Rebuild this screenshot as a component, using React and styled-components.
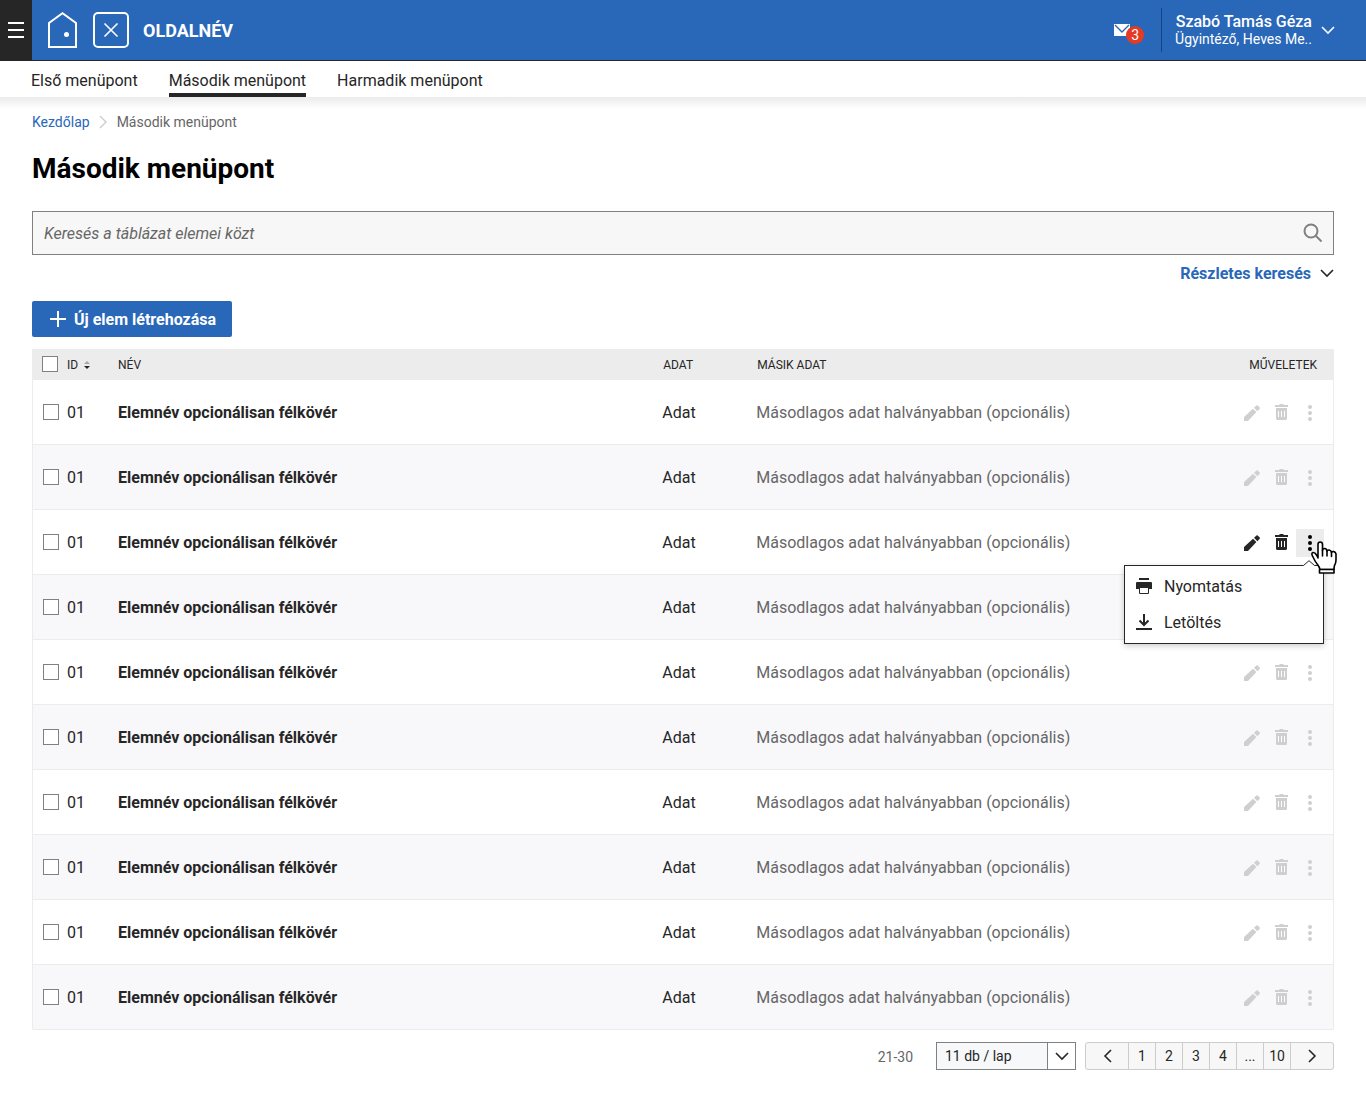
import React, { useState } from 'react';
import styled, { createGlobalStyle } from 'styled-components';

const colors = {
  blue: '#2967b9',
  dark: '#262626',
  grey: '#666666',
  border: '#ececec',
};

const GlobalStyle = createGlobalStyle`
  * {
    box-sizing: border-box;
  }
  body {
    margin: 0;
    background: #ffffff;
    color: ${colors.dark};
    font-family: Roboto, "Open Sans", sans-serif;
    font-size: 16px;
    line-height: 20px;
  }
  button, input, select {
    font: inherit;
    color: inherit;
  }
  button {
    padding: 0;
    border: none;
    background: none;
    cursor: pointer;
  }
  svg {
    display: block;
    flex: none;
  }
`;

//Text beside an icon
const Label = styled.span`
  padding-top: 2px;
`;

//Header
const Header = styled.header`
  display: flex;
  align-items: stretch;
  height: 61px;
  background: ${colors.blue};
  color: #ffffff;
  border-bottom: 1px solid ${colors.dark};
`;

const MenuButton = styled.button`
  display: flex;
  align-items: center;
  justify-content: center;
  width: 32px;
  background: ${colors.dark};
`;

const Brand = styled.div`
  display: flex;
  align-items: center;
  gap: 14px;
  padding-left: 16px;
  font-size: 18px;
  font-weight: 700;
`;

const LogoLinks = styled.div`
  display: flex;
  align-items: center;
  gap: 16px;
`;

const LogoLink = styled.a`
  display: block;
  color: inherit;
`;

const HeaderTools = styled.div`
  display: flex;
  align-items: center;
  gap: 17px;
  margin-left: auto;
  padding-right: 31px;
`;

const MailButton = styled.button`
  display: flex;
  position: relative;
  width: 30px;
  color: #ffffff;
`;

const Badge = styled.span`
  position: absolute;
  left: 12px;
  top: 2px;
  width: 18px;
  height: 18px;
  border-radius: 9px;
  background: #e63a24;
  font-size: 14px;
  line-height: 18px;
  text-align: center;
`;

const UserButton = styled.button`
  display: flex;
  align-items: center;
  gap: 9px;
  height: 44px;
  padding-left: 13px;
  border-left: 1px solid #10437f;
  color: #ffffff;
  text-align: right;
`;

const UserName = styled.span`
  display: block;
  font-weight: 500;
  line-height: 18px;
`;

const UserRole = styled.span`
  display: block;
  font-size: 14px;
  line-height: 16px;
`;

//Navigation
const Nav = styled.nav`
  display: flex;
  gap: 31px;
  height: 36px;
  padding-left: 31px;
`;

const NavLink = styled.a`
  padding-top: 10px;
  color: ${colors.dark};
  text-decoration: none;
  border-bottom: 4px solid ${(props) => (props.$active ? colors.dark : 'transparent')};
`;

const NavShadow = styled.div`
  height: 12px;
  background: linear-gradient(#ebebeb, #ffffff);
`;

//Page content
const Main = styled.main`
  padding: 0 32px 34px;
`;

const Breadcrumb = styled.div`
  display: flex;
  align-items: center;
  gap: 9px;
  height: 25px;
  font-size: 14px;
  color: ${colors.grey};

  a {
    color: ${colors.blue};
    text-decoration: none;
  }
`;

const Title = styled.h1`
  margin: 17px 0 24px;
  color: #000000;
  font-size: 28px;
  line-height: 36px;
  font-weight: 700;
`;

const SearchBox = styled.div`
  display: flex;
  align-items: center;
  height: 44px;
  padding: 0 10px 0 11px;
  border: 1px solid #808080;
  background: #f7f7f7;
`;

const SearchInput = styled.input`
  flex: 1;
  min-width: 0;
  padding: 2px 0 0;
  border: none;
  outline: none;
  background: transparent;

  &::placeholder {
    color: ${colors.grey};
    font-style: italic;
    opacity: 1;
  }
`;

const IconButton = styled.button`
  display: flex;
`;

const DetailsButton = styled.button`
  display: flex;
  align-items: center;
  gap: 9px;
  margin: 8px 0 18px auto;
  color: ${colors.blue};
  font-weight: 700;
  line-height: 18px;
`;

const CreateButton = styled.button`
  display: flex;
  align-items: center;
  gap: 8px;
  height: 36px;
  padding: 0 16px 0 18px;
  border-radius: 2px;
  background: ${colors.blue};
  color: #ffffff;
  font-weight: 700;
`;

//Table
const Table = styled.table`
  width: 100%;
  margin-top: 12px;
  table-layout: fixed;
  border-collapse: separate;
  border-spacing: 0;
`;

const Th = styled.th`
  width: ${(props) => props.$width || 'auto'};
  height: 31px;
  padding: ${(props) => props.$pad || '0'};
  background: ${colors.border};
  font-size: 12px;
  font-weight: 400;
  text-align: ${(props) => props.$align || 'left'};
  text-transform: uppercase;
`;

const SortButton = styled.button`
  display: flex;
  align-items: center;
  gap: 6px;
`;

const Row = styled.tr`
  background: ${(props) => (props.$odd ? '#f8f8fb' : '#ffffff')};

  &:last-child td:first-child {
    border-bottom-left-radius: 2px;
  }
  &:last-child td:last-child {
    border-bottom-right-radius: 2px;
  }
`;

const Td = styled.td`
  height: 65px;
  padding: 2px 0 0;
  border-bottom: 1px solid ${colors.border};
  color: ${(props) => (props.$muted ? colors.grey : colors.dark)};
  font-weight: ${(props) => (props.$bold ? 700 : 400)};

  &:first-child {
    padding: 0 0 0 10px;
    border-left: 1px solid ${colors.border};
  }
  &:last-child {
    padding-right: 9px;
    border-right: 1px solid ${colors.border};
  }
`;

const Checkbox = styled.input`
  display: block;
  appearance: none;
  width: 16px;
  height: 16px;
  margin: 0;
  border: 1px solid #808080;
  background: #ffffff;

  &:checked {
    background: ${colors.blue};
  }
`;

const Actions = styled.div`
  display: flex;
  justify-content: flex-end;
  gap: 1px;
  color: ${(props) => (props.$active ? colors.dark : '#cfcfcf')};
`;

const ActionButton = styled.button`
  display: flex;
  align-items: center;
  justify-content: center;
  width: 28px;
  height: 28px;
  background: ${(props) => (props.$open ? colors.border : 'transparent')};
  color: ${(props) => (props.$open ? '#000000' : 'inherit')};
`;

const MenuAnchor = styled.div`
  position: relative;
`;

const Menu = styled.div`
  position: absolute;
  z-index: 1;
  top: 36px;
  right: 0;
  width: 200px;
  padding: 2px 0 3px;
  border: 1px solid ${colors.dark};
  background: #ffffff;
  box-shadow: 0 2px 6px rgba(0, 0, 0, 0.2);
`;

const MenuCaret = styled.svg`
  position: absolute;
  top: -6px;
  right: 7px;
`;

const MenuItem = styled.button`
  display: flex;
  align-items: center;
  gap: 12px;
  width: 100%;
  height: 36px;
  padding-left: 11px;
  color: ${colors.dark};
`;

const Pointer = styled.svg`
  position: absolute;
  z-index: 2;
  top: 12px;
  left: 14px;
  pointer-events: none;
`;

//Footer with paging
const Footer = styled.div`
  display: flex;
  align-items: center;
  justify-content: flex-end;
  margin-top: 12px;
  font-size: 14px;
`;

const Range = styled(Label)`
  margin-right: 23px;
  color: ${colors.grey};
`;

const SelectBox = styled.div`
  display: grid;
  grid-template-columns: 110px 28px;
  height: 28px;
  margin-right: 9px;
  border: 1px solid #808080;
  background: #f7f8fa;
`;

const PageSize = styled.select`
  grid-area: 1 / 1 / 2 / 3;
  appearance: none;
  padding: 0 0 0 8px;
  border: none;
  background: transparent;
`;

const SelectArrow = styled.span`
  grid-area: 1 / 2;
  display: flex;
  align-items: center;
  justify-content: center;
  border-left: 1px solid #808080;
  background: #ffffff;
  pointer-events: none;
`;

const Pager = styled.nav`
  display: flex;
  height: 28px;
  border: 1px solid #cccccc;
  border-radius: 3px;
  background: #f7f7f7;
`;

const PageButton = styled.button`
  display: flex;
  align-items: center;
  justify-content: center;
  width: ${(props) => props.$width || '27px'};

  & + & {
    border-left: 1px solid #cccccc;
  }
`;

const Chevron = ({ d = 'M1 1l6 6 6-6', width = 14, height = 9 }) => (
  <svg width={width} height={height} viewBox={`0 0 ${width} ${height}`} fill="none" stroke="currentColor" strokeWidth="1.6">
    <path d={d} />
  </svg>
);

const DarkIcon = styled.span`
  display: flex;
  color: ${colors.dark};
`;

const PencilIcon = () => (
  <svg width="16" height="16" viewBox="0 0 16 16" fill="currentColor">
    <path d="M0 16v-4L9 3.700l3.400 3.400L4 16zM10 2.800L12.500.5q.6-.6 1.200 0l2 2q.6.6 0 1.200l-2.300 2.500z" />
  </svg>
);

const TrashIcon = () => (
  <svg width="13" height="18" viewBox="0 0 13 18">
    <path fill="currentColor" d="M0 1h4.500V0h4v1H13v2H0zM1 4h11v10.500q0 1.500-1.500 1.500h-8Q1 16 1 14.500z" />
    <path stroke="#ffffff" d="M3.500 7v6M6.500 7v6M9.500 7v6" />
  </svg>
);

const DotsIcon = () => (
  <svg width="4" height="16" viewBox="0 0 4 16" fill="currentColor">
    <circle cx="2" cy="2" r="2" />
    <circle cx="2" cy="8" r="2" />
    <circle cx="2" cy="14" r="2" />
  </svg>
);

const PrintIcon = () => (
  <svg width="16" height="16" viewBox="0 0 16 16">
    <path fill="currentColor" d="M3 0h10v2H3zM1 4h14q1 0 1 1v6H0V5q0-1 1-1z" />
    <path fill="#ffffff" stroke="currentColor" d="M3.500 9.500h9v6h-9z" />
  </svg>
);

const DownloadIcon = () => (
  <svg width="16" height="16" viewBox="0 0 16 16" fill="none" stroke="currentColor" strokeWidth="2">
    <path d="M8 0v11M3.500 6.500L8 11l4.500-4.500M0 15h16" />
  </svg>
);

const rows = Array.from({ length: 10 }, (_, index) => ({
  key: index,
  id: '01',
  name: 'Elemnév opcionálisan félkövér',
  data: 'Adat',
  other: 'Másodlagos adat halványabban (opcionális)',
}));

//Row buttons and the menu of the opened row
function RowActions({ open, onToggle }) {
  return (
    <Actions $active={open}>
      <ActionButton aria-label="Szerkesztés"><PencilIcon /></ActionButton>
      <ActionButton aria-label="Törlés"><TrashIcon /></ActionButton>
      <MenuAnchor>
        <ActionButton aria-label="További műveletek" aria-expanded={open} $open={open} onClick={onToggle}>
          <DotsIcon />
        </ActionButton>
        {open && (
          <>
            <Menu>
              <MenuCaret width="14" height="7" viewBox="0 0 14 7">
                <path d="M0 6l1-.5L7 .7l6 4.800 1 .5v1H0z" fill="#ffffff" />
                <path d="M0 5.500h1.500L7 .7l5.500 4.800H14" fill="none" stroke="#262626" />
              </MenuCaret>
              <MenuItem><PrintIcon /><Label>Nyomtatás</Label></MenuItem>
              <MenuItem><DownloadIcon /><Label>Letöltés</Label></MenuItem>
            </Menu>
            <Pointer width="28" height="34" viewBox="0 0 28 34" stroke="#000000" strokeWidth="1.600" strokeLinejoin="round" strokeLinecap="round">
              <path
                d="M10 28.500Q9.500 26 7.500 23.500Q5 20.500 2.500 15Q1 12 3 11.500Q5 11.300 6.500 14L8 17V3.500Q8 1 10.200 1T12.500 3.500V9.500Q12.800 7.500 14.700 7.500T17 10Q17.300 8.800 19.200 9T21.500 11.500Q22 10.300 23.800 10.600T26 13V19Q26 22 24.500 24.500Q24 26 24 28.500z"
                fill="#ffffff"
              />
              <path d="M12.500 9v6M17 10v5M21.500 11.500v4" fill="none" />
              <path d="M9.500 28.500h14.500v3.500H9.500z" fill="#ffffff" />
            </Pointer>
          </>
        )}
      </MenuAnchor>
    </Actions>
  );
}

function App() {
  const [openRow, setOpenRow] = useState(2);

  return (
    <>
      <GlobalStyle />
      <Header>
        <MenuButton aria-label="Menü">
          <svg width="16" height="16" viewBox="0 0 16 16" stroke="#ffffff" strokeWidth="2">
            <path d="M0 1h16M0 8h16M0 15h16" />
          </svg>
        </MenuButton>
        <Brand>
          <LogoLinks>
            <LogoLink href="#" aria-label="Kezdőlap">
              <svg width="29" height="36" viewBox="0 0 29 36" fill="none" stroke="#ffffff" strokeWidth="2">
                <path d="M1 35V11L14.500 1.200 28 11v24z" />
                <circle cx="18.500" cy="22.500" r="2.500" fill="#ffffff" stroke="none" />
              </svg>
            </LogoLink>
            <LogoLink href="#" aria-label="Oldalnév">
              <svg width="36" height="36" viewBox="0 0 36 36" fill="none" stroke="#ffffff" strokeWidth="2">
                <rect x="1" y="1" width="34" height="34" rx="4" />
                <path d="M11.500 11.500l13 13M24.500 11.500l-13 13" strokeWidth="1.600" />
              </svg>
            </LogoLink>
          </LogoLinks>
          <Label>OLDALNÉV</Label>
        </Brand>
        <HeaderTools>
          <MailButton aria-label="Üzenetek">
            <svg width="16" height="12" viewBox="0 0 16 12">
              <path fill="#ffffff" d="M0 0h16v12H0z" />
              <path fill="none" stroke="#2967b9" strokeWidth="1.400" d="M1 1l7 7 7-7" />
            </svg>
            <Badge>3</Badge>
          </MailButton>
          <UserButton>
            <span>
              <UserName>Szabó Tamás Géza</UserName>
              <UserRole>Ügyintéző, Heves Me..</UserRole>
            </span>
            <Chevron />
          </UserButton>
        </HeaderTools>
      </Header>

      <Nav>
        <NavLink href="#">Első menüpont</NavLink>
        <NavLink href="#" $active>Második menüpont</NavLink>
        <NavLink href="#">Harmadik menüpont</NavLink>
      </Nav>
      <NavShadow />

      <Main>
        <Breadcrumb>
          <a href="#">Kezdőlap</a>
          <svg width="9" height="14" viewBox="0 0 9 14" fill="none" stroke="#cccccc" strokeWidth="1.400">
            <path d="M1 1l6 6-6 6" />
          </svg>
          <span>Második menüpont</span>
        </Breadcrumb>
        <Title>Második menüpont</Title>

        <SearchBox>
          <SearchInput type="text" aria-label="Keresés" placeholder="Keresés a táblázat elemei közt" />
          <IconButton aria-label="Keresés indítása">
            <svg width="20" height="20" viewBox="0 0 20 20" fill="none" stroke="#808080" strokeWidth="2">
              <circle cx="8" cy="8" r="6.500" />
              <path d="M12.500 12.500l6 6" />
            </svg>
          </IconButton>
        </SearchBox>
        <DetailsButton>
          <Label>Részletes keresés</Label>
          <DarkIcon><Chevron /></DarkIcon>
        </DetailsButton>

        <CreateButton>
          <svg width="16" height="16" viewBox="0 0 16 16" stroke="#ffffff" strokeWidth="2">
            <path d="M8 0v16M0 8h16" />
          </svg>
          <Label>Új elem létrehozása</Label>
        </CreateButton>

        <Table>
          <thead>
            <tr>
              <Th $width="35px" $pad="0 0 2px 10px">
                <Checkbox type="checkbox" aria-label="Összes kijelölése" />
              </Th>
              <Th $width="51px">
                <SortButton>
                  ID
                  <svg width="6" height="8" viewBox="0 0 6 8">
                    <path d="M0 3l3-3 3 3z" fill="#a6a6a6" />
                    <path d="M0 5l3 3 3-3z" fill="#262626" />
                  </svg>
                </SortButton>
              </Th>
              <Th>Név</Th>
              <Th $width="94px" $pad="0 0 0 1px">Adat</Th>
              <Th $width="36%" $pad="0 0 0 1px">Másik adat</Th>
              <Th $width="109px" $pad="0 17px 0 0" $align="right">Műveletek</Th>
            </tr>
          </thead>
          <tbody>
            {rows.map((row, index) => (
              <Row key={row.key} $odd={index % 2 === 1}>
                <Td><Checkbox type="checkbox" aria-label={`${row.name} kijelölése`} /></Td>
                <Td>{row.id}</Td>
                <Td $bold>{row.name}</Td>
                <Td>{row.data}</Td>
                <Td $muted>{row.other}</Td>
                <Td>
                  <RowActions
                    open={openRow === index}
                    onToggle={() => setOpenRow(openRow === index ? null : index)}
                  />
                </Td>
              </Row>
            ))}
          </tbody>
        </Table>

        <Footer>
          <Range>21-30</Range>
          <SelectBox>
            <PageSize aria-label="Elemek száma laponként">
              <option>11 db / lap</option>
            </PageSize>
            <SelectArrow><Chevron /></SelectArrow>
          </SelectBox>
          <Pager aria-label="Lapozó">
            <PageButton $width="42px" aria-label="Előző"><Chevron d="M8 1L2 7l6 6" width={9} height={14} /></PageButton>
            {['1', '2', '3', '4', '...', '10'].map((page) => (
              <PageButton key={page}>{page}</PageButton>
            ))}
            <PageButton $width="43px" aria-label="Következő"><Chevron d="M1 1l6 6-6 6" width={9} height={14} /></PageButton>
          </Pager>
        </Footer>
      </Main>
    </>
  );
}

export default App;
